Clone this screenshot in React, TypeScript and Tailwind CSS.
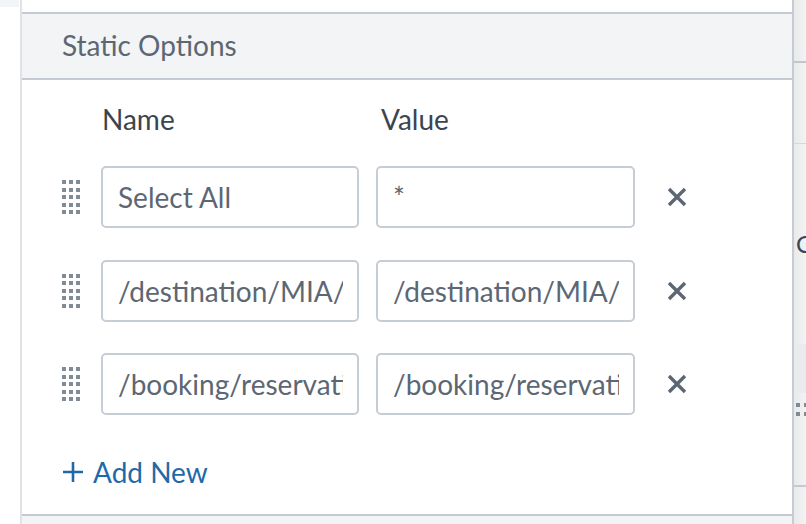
const ROWS = [
  { name: 'Select All', value: '*' },
  { name: '/destination/MIA/details', value: '/destination/MIA/details' },
  { name: '/booking/reservations', value: '/booking/reservations' },
]

function DragHandle() {
  return (
    <div className="grid grid-cols-3 gap-x-[3px] gap-y-[3.5px] w-[18px] shrink-0" aria-hidden="true">
      {Array.from({ length: 15 }).map((_, i) => (
        <span key={i} className="block w-[4px] h-[4px] bg-[#818b95]" />
      ))}
    </div>
  )
}

function RemoveIcon() {
  return (
    <svg className="w-[20px] h-[20px]" viewBox="0 0 20 20" fill="none" stroke="#5c6773" strokeWidth={3.4} aria-hidden="true">
      <path d="M2 2L18 18M18 2L2 18" />
    </svg>
  )
}

export default function App() {
  return (
    <div className="w-[806px] h-[524px] flex bg-white overflow-hidden font-['Lato',sans-serif]">
      {/* left gutter */}
      <div className="w-[20px] shrink-0">
        <div className="h-[7px] w-[19px] bg-[#f2f4f5]" />
      </div>

      {/* panel */}
      <div className="w-[774px] shrink-0 flex flex-col border-l-2 border-l-[#dfe3e8] border-r-2 border-r-[#c5ccd3]">
        <div className="h-[12px] shrink-0" />
        <div className="h-[68px] shrink-0 flex items-center pl-[40px] pb-[3px] bg-[#f2f4f5] border-y-2 border-[#c3cad1]">
          <span className="text-[28px] leading-[34px] text-[#5c6773]">Static Options</span>
        </div>

        <div className="h-[434px] shrink-0 pl-[40px] pt-[22px]">
          {/* column labels */}
          <div className="flex items-center h-[34px] text-[28px] leading-[34px] text-[#3c444d]">
            <div className="w-[39px] shrink-0" />
            <div className="w-[258px] shrink-0 pl-[1px]">Name</div>
            <div className="w-[17px] shrink-0" />
            <div className="pl-[5px]">Value</div>
          </div>

          <div className="flex flex-col gap-[31.5px] mt-[30px]">
            {ROWS.map((row, i) => (
              <div key={i} className="flex items-center h-[62px]">
                <DragHandle />
                <input
                  readOnly
                  value={row.name}
                  className="ml-[21px] w-[258px] h-[62px] pl-[15px] pr-[14px] border-2 border-[#c7cdd4] rounded-[5px] text-[28px] text-[#5c6773] font-['Lato',sans-serif] outline-none bg-white"
                />
                <input
                  readOnly
                  value={row.value}
                  className="ml-[17px] w-[259px] h-[62px] pl-[15px] pr-[14px] border-2 border-[#c7cdd4] rounded-[5px] text-[28px] text-[#5c6773] font-['Lato',sans-serif] outline-none bg-white"
                />
                <button className="ml-[31px] w-[22px] h-[22px] flex items-center justify-center" aria-label="Remove">
                  <RemoveIcon />
                </button>
              </div>
            ))}
          </div>

          <button className="mt-[40px] ml-[1px] flex items-center h-[34px] text-[28px] leading-[34px] text-[#1f69a9]">
            <svg className="w-[20px] h-[20px] mr-[10px]" viewBox="0 0 20 20" fill="none" stroke="#1f69a9" strokeWidth={2.6} aria-hidden="true">
              <path d="M10 0V20M0 10H20" />
            </svg>
            Add New
          </button>
        </div>

        <div className="flex-1 bg-[#f2f4f5] border-t-2 border-[#c3cad1]" />
      </div>

      {/* edge of the neighbouring panel */}
      <div className="flex-1 flex flex-col bg-gradient-to-r from-[#e9eaeb] to-[#f7f7f7]">
        <div className="h-[61px] shrink-0" />
        <div className="h-[2px] shrink-0 bg-[#bfc6cd]" />
        <div className="h-[80px] shrink-0" />
        <div className="h-[1px] shrink-0 bg-[#d3d8dd]" />
        <div className="h-[90px] shrink-0" />
        <div className="h-[20px] shrink-0 overflow-hidden pl-[2px] text-[24px] leading-[20px] text-[#3c444d] font-['Lato',sans-serif]">C</div>
        <div className="h-[90px] shrink-0" />
        <div className="h-[49px] shrink-0 bg-[#e9ebed]" />
        <div className="h-[10px] shrink-0" />
        <div className="pl-[2px] grid grid-cols-2 gap-x-[3px] gap-y-[5px] w-[14px]">
          <span className="block w-[4px] h-[4px] bg-[#818b95]" />
          <span className="block w-[4px] h-[4px] bg-[#818b95]" />
          <span className="block w-[4px] h-[4px] bg-[#818b95]" />
          <span className="block w-[4px] h-[4px] bg-[#818b95]" />
        </div>
        <div className="h-[69px] shrink-0" />
        <div className="h-[2px] shrink-0 bg-[#c3cad1]" />
      </div>
    </div>
  )
}
